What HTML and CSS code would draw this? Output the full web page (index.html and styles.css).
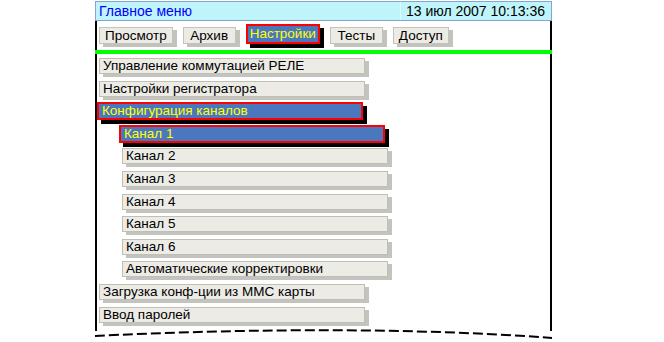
FILE: index.html
```html
<!DOCTYPE html>
<html lang="ru">

<head>
    <meta charset="UTF-8" />
    <meta name="viewport" content="width=device-width, initial-scale=1.0" />
    <title>Главное меню</title>
    <link rel="stylesheet" href="styles.css">
</head>

<body>
    <div class="screen">
        <!-- Заголовок -->
        <div class="title-bar">
            <span class="title">Главное меню</span>
            <span class="clock">13 июл 2007 10:13:36</span>
        </div>

        <div class="panel">
            <!-- Вкладки -->
            <div class="tabs">
                <div class="tab">Просмотр</div>
                <div class="tab">Архив</div>
                <div class="tab active">Настройки</div>
                <div class="tab">Тесты</div>
                <div class="tab">Доступ</div>
            </div>
            <div class="rule"></div>

            <!-- Меню настроек -->
            <div class="menu">
                <div class="item">Управление коммутацией РЕЛЕ</div>
                <div class="item">Настройки регистратора</div>
                <div class="item selected">Конфигурация каналов</div>
                <div class="item sub selected">Канал 1</div>
                <div class="item sub">Канал 2</div>
                <div class="item sub">Канал 3</div>
                <div class="item sub">Канал 4</div>
                <div class="item sub">Канал 5</div>
                <div class="item sub">Канал 6</div>
                <div class="item sub">Автоматические корректировки</div>
                <div class="item">Загрузка конф-ции из ММС карты</div>
                <div class="item">Ввод паролей</div>
            </div>
        </div>

        <!-- Оборванный край -->
        <svg class="torn" width="460" height="14" viewBox="0 0 460 14">
            <path d="M1 9 C 120 3, 300 -1, 458 11" fill="none" stroke="#000" stroke-width="2" stroke-dasharray="10 4" />
        </svg>
    </div>
</body>

</html>
```

FILE: styles.css
```css
body {
    margin: 0;
    background: #fff;
    font-family: 'Liberation Sans', Arial, sans-serif;
    font-size: 13.5px;
    color: #000;
    overflow: hidden;
}

.screen {
    margin: 1px 0 0 95px;
    width: 457px;
}

.title-bar {
    height: 20px;
    box-sizing: border-box;
    border: 1px solid #86a4d2;
    background: #bff5fa;
    display: flex;
    justify-content: space-between;
    align-items: stretch;
    font-size: 14px;
}

.title {
    color: #0000ff;
    padding-left: 3px;
    line-height: 18px;
}

.clock {
    border-left: 1px solid #dcfbfd;
    padding: 0 6px 0 5px;
    line-height: 18px;
}

.panel {
    height: 310px;
    box-sizing: border-box;
    border-left: 2px solid #000;
    border-right: 2px solid #000;
}

.tabs {
    display: flex;
    align-items: flex-end;
    gap: 10px;
    padding: 3px 0 0 2px;
}

.tab {
    min-width: 53px;
    height: 17px;
    box-sizing: border-box;
    padding: 0 5px;
    text-align: center;
    line-height: 15px;
    background: #ecebe6;
    border: 1px solid #c4c4b6;
    box-shadow: 4px 3px 0 #c2c2be;
}

.tab.active {
    height: 20px;
    line-height: 16px;
    padding: 0 2px;
    background: #4b77be;
    border: 2px solid #ff0000;
    color: #ffff00;
    box-shadow: 4px 4px 0 #000;
}

.rule {
    height: 4px;
    margin: 6px -2px 0 -2px;
    background: #00ff00;
}

.menu {
    display: flex;
    flex-direction: column;
    align-items: flex-start;
    gap: 6.6px;
    padding: 4px 0 0 2px;
}

.item {
    width: 266px;
    height: 16px;
    box-sizing: border-box;
    padding-left: 3px;
    line-height: 14px;
    background: #ecebe6;
    border: 1px solid #c0c0b2;
    box-shadow: 4px 3px 0 #c3c3bf;
    white-space: nowrap;
}

.item.sub {
    margin-left: 23px;
}

.item.selected {
    height: 18px;
    margin: -1px 0 -1px -2px;
    line-height: 14px;
    background: #4b77be;
    border: 2px solid #ff0000;
    color: #ffff00;
    box-shadow: 4px 4px 0 #000;
}

.item.sub.selected {
    margin-left: 20px;
}

.torn {
    display: block;
    margin: -4px 0 0 -1px;
}
```
